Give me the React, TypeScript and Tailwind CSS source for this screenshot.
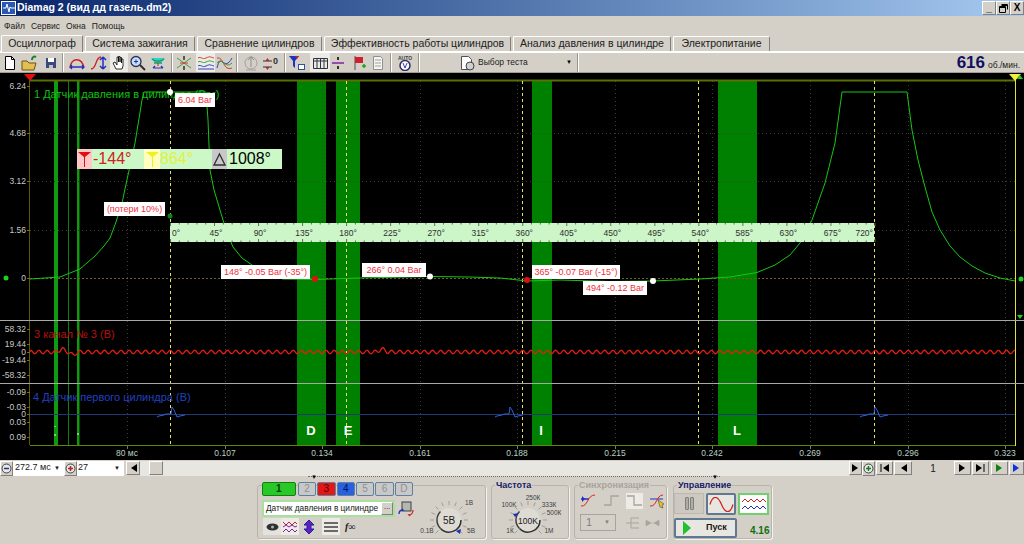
import { ReactNode } from "react";

const raised = "border border-t-white border-l-white border-r-[#808080] border-b-[#808080] bg-[#d4d0c8]";

const tabs = [
  { label: "Система зажигания", w: "w-[110px]" },
  { label: "Сравнение цилиндров", w: "w-[125px]" },
  { label: "Эффективность работы цилиндров", w: "w-[187px]" },
  { label: "Анализ давления в цилиндре", w: "w-[158px]" },
  { label: "Электропитание", w: "w-[97px]" },
];

const Ico = ({ children, w = 16 }: { children: ReactNode; w?: number }) => (
  <svg width={w} height="16" viewBox={`0 0 ${w} 16`} fill="none" className="shrink-0">
    {children}
  </svg>
);

const Sep = () => <div className="w-[2px] h-[19px] border-l border-l-[#9a9690] border-r border-r-white shrink-0" />;

const Toolbar = () => (
  <div className="h-[21px] flex items-center pl-[2px] border-t border-t-white border-b border-b-[#a09c94] relative">
    <Ico><path d="M3.500 1.500h6l3 3v10h-9z" fill="#fff" stroke="#000" /><path d="M9.500 1.500v3h3" stroke="#000" /></Ico>
    <div className="w-[3px]" />
    <Ico w={18}><path d="M1 6h5l2 2h7l-2 7H1z" fill="#e0c050" stroke="#705010" /><path d="M11 5c0-3 2-4 4-3" stroke="#208020" strokeWidth="2" /></Ico>
    <div className="w-[4px]" />
    <Ico><path d="M3 3h10v10H3z" fill="#3a4a80" /><path d="M5 3h6v4H5z" fill="#fff" /><path d="M6 10h4v3H6z" fill="#c0c0c0" /></Ico>
    <div className="w-[3px]" />
    <Sep />
    <div className="w-[3px]" />
    <Ico w={20}><path d="M3 13C4 2 15 2 17 13" stroke="#d02020" strokeWidth="1.500" /><path d="M3 12h14M3 12l2-2M3 12l2 2M17 12l-2-2M17 12l-2 2" stroke="#2030c0" strokeWidth="1.300" /></Ico>
    <div className="w-[3px]" />
    <Ico w={20}><path d="M1 14C7 14 5 2 11 2" stroke="#d02020" strokeWidth="1.300" /><path d="M13 2v12M13 2l-3 3M13 2l3 3M13 14l-3-3M13 14l3-3" stroke="#2030c0" strokeWidth="1.500" /></Ico>
    <div className="w-[18px] h-[19px] bg-[#ecebe6] flex items-center justify-center">
      <Ico><path d="M5 14L2 8l2-1 2 3V2h1.500v5V1.500H9V7V2.500h1.500V8V4H12v7l-1 3z" fill="#fff" stroke="#000" strokeWidth=".8" /></Ico>
    </div>
    <div className="w-[1px]" />
    <Ico w={17}><circle cx="7" cy="6.500" r="5" fill="#c8e0f0" stroke="#303060" strokeWidth="1.300" /><path d="M5 6.500h4M7 4.500v4" stroke="#2030c0" /><path d="M11 10l5 5" stroke="#303030" strokeWidth="2" /></Ico>
    <div className="w-[3px]" />
    <Ico w={18}><path d="M2 3h14l-4 5H6z" fill="#30d0d0" /><path d="M3 4c3 3 9 3 12 0M5 8h8" stroke="#20a060" strokeWidth="1.500" /><path d="M4 13h10M4 13l2-2M14 13l-2-2" stroke="#2030c0" strokeWidth="1.200" /><path d="M9 8v3" stroke="#d02020" /></Ico>
    <div className="w-[4px]" />
    <Sep />
    <div className="w-[2px]" />
    <Ico w={18}><path d="M2 3L16 13M2 13L16 3" stroke="#40a040" /><path d="M9 1v4M9 11v4" stroke="#303030" strokeWidth="1.500" /><path d="M5 8h8" stroke="#d03030" /></Ico>
    <div className="w-[3px]" />
    <div className="w-[19px] h-[19px] bg-[#ecebe6] flex items-center justify-center">
      <Ico w={18}><path d="M1 3c3-2 4 2 8 0s4-1 8 0" stroke="#d04030" /><path d="M1 7c3-2 4 2 8 0s4-1 8 0" stroke="#30a030" /><path d="M1 11c3-2 4 2 8 0s4-1 8 0" stroke="#3040c0" /><path d="M1 14h16" stroke="#3040c0" /></Ico>
    </div>
    <div className="w-[1px]" />
    <Ico w={18}><path d="M1 13C5-4 8 18 16 3" stroke="#3040c0" /><path d="M1 3c7-2 6 14 15 10" stroke="#d04030" /><path d="M1 8c5-7 8 7 15 0" stroke="#30a030" /></Ico>
    <div className="w-[2px]" />
    <Sep />
    <div className="w-[4px]" />
    <Ico w={18}><circle cx="9" cy="8" r="6" stroke="#a0a0a0" /><path d="M9 1v11M6 5l3-3 3 3" stroke="#909090" /><path d="M4 15h10" stroke="#a0a0a0" /></Ico>
    <div className="w-[2px]" />
    <Ico w={19}><path d="M1 6h9M1 12h9" stroke="#303030" /><path d="M5.500 3l-2 3h4zM5.500 15l-2-3h4z" fill="#c02020" /><text x="11" y="9" fontSize="9" fontWeight="700" fill="#303030" fontFamily="Liberation Sans, sans-serif">0</text></Ico>
    <div className="w-[3px]" />
    <Sep />
    <div className="w-[2px]" />
    <Ico w={18}><path d="M1 1h10L7 6v7L5 11V6z" fill="#2030c0" /><path d="M7 1h4L9 4z" fill="#d02020" /><rect x="10.500" y="9.500" width="6" height="5" fill="#fff" stroke="#3050a0" /></Ico>
    <div className="w-[4px]" />
    <div className="w-[20px] h-[19px] bg-[#ecebe6] flex items-center justify-center">
      <Ico w={17}><path d="M1.500 3.500h14v10h-14zM1.500 6h14M5 3.500v10M8.500 3.500v10M12 3.500v10" stroke="#303040" /></Ico>
    </div>
    <Ico><path d="M2 8h12" stroke="#8020a0" strokeWidth="1.500" /><path d="M8 2v3M8 11v3" stroke="#303030" strokeWidth="2" /></Ico>
    <div className="w-[5px]" />
    <Ico><path d="M4 1v14" stroke="#505050" /><path d="M4 2h8v6H4z" fill="#d02030" /><path d="M11 11h4M13 9v4" stroke="#20a020" strokeWidth="1.500" /></Ico>
    <div className="w-[3px]" />
    <Ico><path d="M3.500 1.500h7l2 2v11h-9z" fill="#f4f4f0" stroke="#909090" /><path d="M5 5h6M5 8h6M5 11h6" stroke="#a0a0a0" /></Ico>
    <div className="w-[4px]" />
    <Sep />
    <div className="w-[4px]" />
    <Ico w={18}><text x="2" y="5" fontSize="5" fontWeight="700" fill="#404040" fontFamily="Liberation Sans, sans-serif">AUTO</text><circle cx="9" cy="10.500" r="5" fill="#fff" stroke="#303060" strokeWidth="1.500" /><path d="M7 8l2 5 2-5" stroke="#3040c0" /></Ico>
    <div className="w-[4px]" />
    <Sep />
    <div className="w-[38px]" />
    <Ico w={20}><path d="M3.500 1.500h7l3 3v10h-10z" fill="#fff" stroke="#505050" /><circle cx="12" cy="11" r="4" fill="#d0d0d0" stroke="#404040" /></Ico>
    <span className="text-[8.500px] w-[88px] text-[#202020] whitespace-nowrap">Выбор теста</span>
    <span className="text-[6px] text-black w-[11px]">▼</span>
    <Sep />
    <div className="ml-auto mr-[4px] flex items-baseline gap-[3px]">
      <span className="text-[17px] leading-none font-bold text-[#101060]">616</span>
      <span className="text-[8.500px] text-[#202020]">об./мин.</span>
    </div>
  </div>
);

const yLabels: [string, number][] = [
  ["6.24", 89], ["4.68", 136], ["3.12", 184], ["1.56", 233], ["0", 281],
  ["58.32", 332], ["19.44", 347], ["0", 355], ["-19.44", 363], ["-58.32", 378],
  ["-0.09", 395], ["-0.03", 410], ["0", 417], ["0.03", 425], ["0.09", 440],
];
const times: [string, number][] = [
  ["80 мс", 127], ["0.107", 225], ["0.134", 322], ["0.161", 420], ["0.188", 517],
  ["0.215", 615], ["0.242", 712], ["0.269", 810], ["0.296", 908], ["0.323", 1005],
];
const bands: [number, number][] = [[297, 29], [336, 24], [532, 20], [718, 39]];
const thin: [number, number, string][] = [[54, 4, "#109a10"], [68, 1, "#0c800c"], [77, 2.500, "#109a10"]];
const cursors = [170.500, 346.500, 522.500, 698.500, 874.500];
const marks: [string, number][] = [["D", 311], ["E", 348], ["I", 541], ["L", 737]];

const pressure =
  "M30 279 L60 277 L80 269 L95 256 L104 246 L110 238 L116 222 L122 203 L128 175 L135 143 L142 100 L144 92 L206 92 L208 120 L210 170 L214 190 L220 210 L226 230 L233 247 L242 258 L252 265 L265 274 L283 279 L315 279.500 L360 278 L430 276.500 L470 277 L500 278 L527 281 L560 280 L610 281.500 L653 281 L700 279 L730 277 L757 272.500 L775 265 L790 255 L800 243 L812 220 L825 183 L835 143 L842 92 L907 92 L912 130 L918 160 L925 187 L932 212 L940 230 L950 246 L960 257 L972 266 L985 273 L1000 278 L1015 281";

const redWave = () => {
  let d = "M30 352";
  for (let x = 31; x <= 1015; x += 1) {
    const bump = Math.exp(-((x - 62) ** 2) / 12) * -3 + Math.exp(-((x - 73) ** 2) / 10) * 3 + Math.exp(-((x - 382) ** 2) / 12) * -3;
    d += ` L${x} ${(352 + 1.800 * Math.sin((x * 2 * Math.PI) / 8.200) + bump).toFixed(1)}`;
  }
  return d;
};

const bluePulse = (x: number) =>
  `M${x - 15} 417 L${x - 13} 416 L${x - 8} 415 L${x - 6} 414 L${x - 1} 414 L${x} 407 L${x + 2} 410 L${x + 5} 417 L${x + 8} 416 L${x + 13} 415`;

const rulerTicks = Array.from({ length: 81 }, (_, i) => 170.500 + i * 8.806);
const rulerLabels = Array.from({ length: 16 }, (_, i) => ({ t: `${(i + 1) * 45}°`, x: 172 + (i + 1) * 44.030 }));

const PlotSvg = () => (
  <svg className="absolute inset-0" width="1024" height="387" viewBox="0 73 1024 387" fontFamily="Liberation Sans, sans-serif">
    <rect x="0" y="73" width="1024" height="387" fill="#000" />
    {bands.map(([x, w]) => <rect key={x} x={x} y="81" width={w} height="364" fill="#008000" />)}
    {thin.map(([x, w, c]) => <rect key={x} x={x} y="81" width={w} height="364" fill={c} />)}
    {times.map(([, x]) => <path key={x} d={`M${x + 0.500} 81V445`} stroke="#3a3a3a" strokeDasharray="1 3" />)}
    {[133, 181, 230].map((y) => <path key={y} d={`M30 ${y}.5H1015`} stroke="#3a3a3a" strokeDasharray="1 3" />)}
    <path d="M30 278.500H1015" stroke="#706020" strokeDasharray="2 2" />
    <path d="M30 80.500H1015" stroke="#5a7000" strokeWidth="2" />
    <path d="M29.500 80V445" stroke="#605800" />
    <path d="M30 445.500H1015" stroke="#5a8a00" />
    <path d="M1015.500 80V446" stroke="#e0e040" />
    {cursors.map((x) => <path key={x} d={`M${x} 81V445`} stroke="#e8e060" strokeDasharray="3 3" />)}
    <path d="M0 320.500H1024M0 383.500H1024" stroke="#a8a8a8" />
    <path d={pressure} stroke="#14c814" fill="none" />
    <path d={redWave()} stroke="#e02010" strokeWidth="1.300" fill="none" />
    <path d="M30 414.500H1015" stroke="#203a78" />
    {[172, 510, 875].map((x) => <path key={x} d={bluePulse(x)} stroke="#3060d8" fill="none" />)}
    <path d="M55 426v1M55 434v2M78 433v2" stroke="#e0ffe0" />
    {yLabels.map(([t, y]) => <text key={t + y} x="26" y={y} textAnchor="end" fontSize="8.500" fill="#c8c8c8">{t}</text>)}
    {yLabels.map(([t, y]) => <path key={`tick${t}${y}`} d={`M27 ${y - 3}.5H30`} stroke="#807000" />)}
    {times.map(([t, x]) => <text key={t} x={x} y="456" textAnchor="middle" fontSize="8.500" fill="#b8d0c0">{t}</text>)}
    {times.map(([t, x]) => <path key={`t${t}`} d={`M${x + 0.500} 446v3`} stroke="#708060" />)}
    <text x="34" y="98" fontSize="11" fill="#10c010">1 Датчик давления в цилиндре (Bar)</text>
    <text x="34" y="338" fontSize="11" fill="#b81010">3 канал № 3 (В)</text>
    <text x="33" y="401" fontSize="11" fill="#2040c0">4 Датчик первого цилиндра (В)</text>
    {marks.map(([t, x]) => <text key={t} x={x} y="435" textAnchor="middle" fontSize="13" fontWeight="700" fill="#fff">{t}</text>)}
    <path d="M24 74h12l-6 7z" fill="#e01010" />
    <path d="M1009 74h12l-6 7z" fill="#f0f040" />
    <path d="M1017 79l3-4 3 4zM1017 315l3 4 3-4z" fill="#20d020" />
    <circle cx="1021" cy="279" r="2.500" fill="#20d020" />
    <circle cx="6" cy="278" r="2.500" fill="#20d020" />

    <rect x="170" y="223" width="704" height="19" fill="#ccf5c8" />
    {rulerTicks.map((x, i) => (
      <path key={x} d={`M${x} 223v${i % 5 === 0 ? 3 : 1.500}M${x} 242v-${i % 5 === 0 ? 3 : 1.500}`} stroke="#607060" />
    ))}
    <text x="172" y="236" fontSize="8.500" fill="#303030">0°</text>
    {rulerLabels.map(({ t, x }, i) => (
      <text key={t} x={i === 15 ? 873 : x} y="236" textAnchor={i === 15 ? "end" : "middle"} fontSize="8.500" fill="#303030">{t}</text>
    ))}

    <circle cx="170" cy="92" r="3" fill="#fff" />
    <circle cx="170" cy="216" r="2.500" fill="#108010" />
    <circle cx="315" cy="279" r="3" fill="#e01010" />
    <circle cx="430" cy="276.500" r="3" fill="#fff" />
    <circle cx="527" cy="280" r="3" fill="#e01010" />
    <circle cx="653" cy="281" r="3" fill="#fff" />
  </svg>
);

const notes = [
  { t: "6.04 Bar", c: "top-[20px] left-[175px] w-[40px]" },
  { t: "(потери 10%)", c: "top-[129px] left-[104px] w-[61px]" },
  { t: "148° -0.05 Bar (-35°)", c: "top-[192px] left-[221px] w-[89px]" },
  { t: "266° 0.04 Bar", c: "top-[190px] left-[362px] w-[64px]" },
  { t: "365° -0.07 Bar (-15°)", c: "top-[192px] left-[532px] w-[88px]" },
  { t: "494° -0.12 Bar", c: "top-[208px] left-[583px] w-[64px]" },
];

const CursorBox = () => (
  <div className="absolute top-[76px] left-[77px] w-[205px] h-[20px] bg-[#ccf8c8] flex items-center text-[16px] leading-none">
    <div className="w-[15px] h-full bg-[#ffc8c8] flex items-center justify-center">
      <svg width="15" height="17" viewBox="0 0 15 17"><path d="M1 1h13L8 6v10H7V6z" fill="#e01010" /></svg>
    </div>
    <span className="w-[52px] pl-[1px] text-[#d02020]">-144°</span>
    <div className="w-[16px] h-full bg-[#ffffc0] flex items-center justify-center">
      <svg width="15" height="17" viewBox="0 0 15 17"><path d="M1 1h13L8 6v10H7V6z" fill="#f0f020" /></svg>
    </div>
    <span className="w-[52px] text-[#e4f040]">864°</span>
    <div className="w-[15px] h-full bg-[#c8c8c8] flex items-center justify-center">
      <svg width="13" height="14" viewBox="0 0 13 14"><path d="M6.500 2L12 13H1z" fill="none" stroke="#303030" strokeWidth="1.300" /></svg>
    </div>
    <span className="ml-[2px] text-black">1008°</span>
  </div>
);

const Plot = () => (
  <div className="relative h-[387px] bg-black overflow-hidden">
    <PlotSvg />
    {notes.map((n) => (
      <div key={n.t} className={`absolute h-[14px] bg-white text-[#f03040] text-[9px] leading-[14px] text-center whitespace-nowrap ${n.c}`}>
        {n.t}
      </div>
    ))}
    <CursorBox />
  </div>
);

const NavBtn = ({ children, w = "w-[17px]" }: { children: ReactNode; w?: string }) => (
  <div className={`${w} h-[14px] ${raised} flex items-center justify-center shrink-0`}>{children}</div>
);
const Tri = ({ dir, color = "#000" }: { dir: "l" | "r"; color?: string }) => (
  <svg width="7" height="8" viewBox="0 0 7 8"><path d={dir === "l" ? "M7 0v8L1 4z" : "M0 0v8l6-4z"} fill={color} /></svg>
);
const RoundBtn = ({ color, plus }: { color: string; plus?: boolean }) => (
  <div className={`w-[13px] h-[15px] ${raised} flex items-center justify-center shrink-0`}>
    <svg width="11" height="11" viewBox="0 0 11 11">
      <circle cx="5.500" cy="5.500" r="4.500" fill="#e8e8e8" stroke="#404040" />
      <path d="M3 5.500h5" stroke={color} strokeWidth="1.500" />
      {plus && <path d="M5.500 3v5" stroke={color} strokeWidth="1.500" />}
    </svg>
  </div>
);

const Controls = () => (
  <div className="h-[16px] flex items-center text-[9px] text-[#202020]">
    <RoundBtn color="#303080" />
    <div className="w-[51px] h-[15px] bg-white flex items-center justify-between pl-[2px] pr-[4px] whitespace-nowrap">
      <span>272.7 мс</span><span className="text-[6px]">▼</span>
    </div>
    <RoundBtn color="#b02020" plus />
    <div className="w-[47px] h-[15px] bg-white flex items-center justify-between pl-[1px] pr-[4px]">
      <span>27</span><span className="text-[6px]">▼</span>
    </div>
    <div className="w-[2px]" />
    <NavBtn w="w-[14px]"><Tri dir="l" /></NavBtn>
    <div className="flex-1 h-[15px] bg-[#e8e6e1] pl-[9px]">
      <div className={`w-[14px] h-[14px] ${raised}`} />
    </div>
    <NavBtn w="w-[13px]"><Tri dir="r" /></NavBtn>
    <RoundBtn color="#108010" plus />
    <div className="w-[1px]" />
    <NavBtn>
      <svg width="9" height="8" viewBox="0 0 9 8"><path d="M1 0v8" stroke="#000" /><path d="M9 0v8L3 4z" /></svg>
    </NavBtn>
    <div className="w-[1px]" />
    <NavBtn w="w-[18px]"><Tri dir="l" /></NavBtn>
    <div className="w-[42px] text-center text-[10px]">1</div>
    <NavBtn><Tri dir="r" /></NavBtn>
    <div className="w-[1px]" />
    <NavBtn>
      <svg width="9" height="8" viewBox="0 0 9 8"><path d="M8 0v8" stroke="#000" /><path d="M0 0v8l6-4z" /></svg>
    </NavBtn>
    <div className="w-[2px]" />
    <NavBtn><Tri dir="r" color="#108010" /></NavBtn>
    <div className="w-[1px]" />
    <NavBtn w="w-[15px]"><Tri dir="r" color="#1030e0" /></NavBtn>
  </div>
);

const Group = ({ title, muted, className, children }: { title?: string; muted?: boolean; className: string; children: ReactNode }) => (
  <div className={`relative h-[54px] rounded-[3px] border border-[#b8b4ac] shadow-[1px_1px_0_#f4f2ee] ${className}`}>
    {title && (
      <span className={`absolute -top-[7px] left-[3px] px-[1px] bg-[#d4d0c8] text-[9px] font-bold leading-[12px] whitespace-nowrap ${muted ? "text-[#a8a49c]" : "text-[#14206a]"}`}>
        {title}
      </span>
    )}
    {children}
  </div>
);

const chans = [
  { t: "2", c: "w-[19px] bg-[#c8c8c8] text-[#909090]" },
  { t: "3", c: "w-[19px] bg-[#e01818] text-[#600000]" },
  { t: "4", c: "w-[19px] bg-[#2860e0] text-[#001060]" },
  { t: "5", c: "w-[19px] bg-[#c8c8c8] text-[#909090]" },
  { t: "6", c: "w-[19px] bg-[#c8c8c8] text-[#909090]" },
  { t: "D", c: "w-[19px] bg-[#c8c8c8] text-[#909090]" },
];

const Dial = ({ label, fs, arrow, labels }: { label: string; fs: number; arrow: string; labels: [string, number, number][] }) => {
  const ticks = Array.from({ length: 13 }, (_, i) => (135 + i * 22.500) * (Math.PI / 180));
  return (
    <svg width="72" height="46" viewBox="-36 -27 72 46" fontFamily="Liberation Sans, sans-serif" className="shrink-0">
      {ticks.map((a) => (
        <path key={a} d={`M${(15 * Math.cos(a)).toFixed(1)} ${(15 * Math.sin(a)).toFixed(1)}L${(19 * Math.cos(a)).toFixed(1)} ${(19 * Math.sin(a)).toFixed(1)}`} stroke="#a09c94" />
      ))}
      <circle r="12" fill="#dedbd4" />
      <path d="M-8.500 8.500A12 12 0 0 1 -8.500 -8.500" stroke="#404040" fill="none" strokeWidth="1.500" />
      <path d="M-8.500 8.500A12 12 0 0 0 12 0" stroke="#303030" fill="none" strokeWidth="1.500" />
      <path d={arrow} fill="#1830c0" />
      <text y="3.500" textAnchor="middle" fontSize={fs} fill="#202020">{label}</text>
      {labels.map(([t, x, y]) => <text key={t} x={x} y={y} textAnchor="middle" fontSize="6.500" fill="#404040">{t}</text>)}
    </svg>
  );
};

const Panel = () => (
  <div className="h-[68px] flex flex-col">
    <div className="ml-[308px] w-[412px] h-[4px] border-t border-dotted border-[#707070] relative">
      <span className="absolute -top-[3px] left-[3px] text-[6px] leading-none">▼</span>
      <span className="absolute -top-[3px] right-[2px] text-[6px] leading-none">▼</span>
    </div>
    <div className="flex mt-[5px] ml-[257px] gap-[5px]">
      <Group className="w-[229px] flex">
        <div className="w-[155px] shrink-0 pl-[4px] -mt-[4px] flex flex-col">
          <div className="flex gap-[1px] h-[14px]">
            <div className="w-[35px] mr-[1px] rounded-[2px] bg-[#28c828] border border-[#108010] text-center text-[10px] leading-[12px] font-bold text-[#004000]">1</div>
            {chans.map((c) => (
              <div key={c.t} className={`rounded-[2px] border border-[#6080a0] text-center text-[10px] leading-[12px] ${c.c}`}>{c.t}</div>
            ))}
          </div>
          <div className="flex items-center mt-[4px]">
            <div className="w-[133px] shrink-0 h-[17px] bg-white border-2 border-[#a8e0a0] flex items-center pl-[2px] text-[8.300px] text-[#181818] relative whitespace-nowrap">
              Датчик давления в цилиндре
              <span className={`absolute right-0 top-0 w-[12px] h-[13px] ${raised} text-[8px] leading-[8px] text-center`}>...</span>
            </div>
            <div className="ml-[3px] shrink-0">
              <Ico w={16}><rect x="4" y="1" width="9" height="9" fill="#b0b8b0" stroke="#404040" /><path d="M1 13c0-3 2-4 4-4l-1-1" stroke="#2030c0" strokeWidth="1.300" /><path d="M15 9c0 3-2 5-4 5l1 1" stroke="#d02020" strokeWidth="1.300" /></Ico>
            </div>
          </div>
          <div className="flex items-center mt-[1px] pl-[1px]">
            <div className="w-[18px] h-[17px] bg-[#e4e2dc] flex items-center justify-center">
              <svg width="13" height="8" viewBox="0 0 13 8"><ellipse cx="6.500" cy="4" rx="6" ry="3.500" fill="#303030" /><circle cx="6.500" cy="4" r="1.500" fill="#b0b0b0" /></svg>
            </div>
            <div className="w-[18px] h-[17px] bg-[#ecebe6] flex items-center justify-center">
              <Ico><path d="M1 3l3 3 3-3 3 3 3-3 2 2" stroke="#c02030" /><path d="M1 8l3-2 3 2 3-2 3 2 2-1" stroke="#8020a0" /><path d="M1 13l3-3 3 3 3-3 3 3 2-2" stroke="#8020a0" /></Ico>
            </div>
            <div className="w-[19px] flex justify-center">
              <Ico><path d="M8 1L3 6h3v4H3l5 5 5-5h-3V6h3z" fill="#6020c0" stroke="#2020a0" /></Ico>
            </div>
            <div className="w-[4px]" />
            <div className="w-[18px] h-[17px] bg-[#ecebe6] flex items-center justify-center">
              <Ico><path d="M1 4h14M1 8h14M1 12h14" stroke="#404040" strokeWidth="1.300" /></Ico>
            </div>
            <span className="ml-[5px] text-[10px] font-bold italic font-['Liberation_Serif',serif] text-[#181818]">f∞</span>
          </div>
        </div>
        <div className="pt-[7px]">
          <Dial label="5В" fs={10} arrow="M7 11l5-2-1 5z" labels={[["1В", 20, -15], ["5В", 22, 13], ["0.1В", -22, 13]]} />
        </div>
      </Group>
      <Group title="Частота" className="w-[78px] flex pt-[7px]">
        <Dial label="100K" fs={8.500} arrow="M-15 -6l6-1-4 4z" labels={[["250К", 5, -20], ["100K", -19, -13], ["333К", 21, -13], ["500К", 26, -5], ["1К", -18, 13], ["1M", 21, 13]]} />
      </Group>
      <Group title="Синхронизация" muted className="w-[93px] px-[5px] pt-[7px]">
        <div className="flex items-center gap-[6px]">
          <Ico w={17}><path d="M1 6h8" stroke="#2030c0" strokeWidth="1.500" /><path d="M1 13C8 14 7 2 15 2" stroke="#e02020" /><path d="M2 3v6l3-3z" fill="#2030c0" /></Ico>
          <Ico w={17}><path d="M1 12h7V3h8M8 5v6" stroke="#a8a49c" strokeWidth="1.300" /></Ico>
          <div className="w-[17px] h-[16px] bg-[#ecebe6]"><Ico w={17}><path d="M1 3h7v9h8M8 5v6" stroke="#a8a49c" strokeWidth="1.300" /></Ico></div>
          <Ico w={17}><path d="M1 6h13" stroke="#2030c0" /><path d="M1 13C8 14 7 2 14 2" stroke="#e02020" /><path d="M9 7l6 4-2 1 1 3-3-1z" fill="#f0c020" stroke="#303030" strokeWidth=".5" /></Ico>
        </div>
        <div className="flex items-center mt-[5px]">
          <div className="w-[36px] h-[17px] border border-[#a8a49c] flex items-center justify-between px-[5px] text-[11px] text-[#808080]">
            <span>1</span><span className="text-[6px]">▼</span>
          </div>
          <div className="ml-[9px]"><Ico w={15}><path d="M1 8h5M6 3v10M6 3h8M6 8h8M6 13h8" stroke="#a8a49c" /></Ico></div>
          <div className="ml-[5px]"><Ico w={15}><path d="M0 8h15M1 5l5 3-5 3zM14 5L9 8l5 3z" fill="#a8a49c" stroke="#a8a49c" strokeWidth=".5" /></Ico></div>
        </div>
      </Group>
      <Group title="Управление" className="w-[99px] ml-[1px] pt-[7px]">
        <div className="flex gap-[2px]">
          <div className="w-[30px] h-[21px] bg-[#cdc9c1] border border-[#bcb8b0] flex items-center justify-center gap-[1px]">
            <div className="w-[4px] h-[13px] rounded-[1px] bg-[#b0aca4] border border-[#808080]" /><div className="w-[4px] h-[13px] rounded-[1px] bg-[#b0aca4] border border-[#808080]" />
          </div>
          <div className="w-[30px] h-[22px] bg-[#e8e6e0] border-2 border-[#607890] rounded-[2px] flex items-center justify-center">
            <svg width="25" height="15" viewBox="0 0 25 15"><path d="M1 7.500C4-3 9-1 12.500 7.500S21 18 24 7.500" stroke="#d02020" strokeWidth="1.200" fill="none" /></svg>
          </div>
          <div className="w-[31px] h-[22px] bg-white border-2 border-[#70d070] flex items-center justify-center">
            <svg width="26" height="16" viewBox="0 0 26 16"><path d="M1 6l3-3 3 3 3-3 3 3 3-3 3 3 3-3 3 3" stroke="#d02020" fill="none" /><path d="M1 13l3-3 3 3 3-3 3 3 3-3 3 3 3-3 3 3" stroke="#2030c0" fill="none" /></svg>
          </div>
        </div>
        <div className="flex items-center mt-[2px]">
          <div className="w-[63px] h-[20px] bg-[#e8e6e0] border-2 border-[#607890] rounded-[2px] flex items-center pl-[6px]">
            <svg width="10" height="14" viewBox="0 0 10 14"><path d="M1 0v14l8-7z" fill="#20c030" /></svg>
            <span className="ml-[14px] text-[9px] font-bold text-[#181818]">Пуск</span>
          </div>
          <span className="ml-[13px] mt-[6px] text-[10px] font-bold text-[#107010]">4.16</span>
        </div>
      </Group>
    </div>
  </div>
);

export default function App() {
  return (
    <div className="w-[1024px] h-[544px] overflow-hidden flex flex-col bg-[#d4d0c8] font-['Liberation_Sans',sans-serif]">
      <div className="h-[16px] flex items-center bg-gradient-to-r from-[#0a246a] to-[#a6caf0]">
        <div className="w-[15px] h-[14px] ml-[1px] bg-[#2a58b0] border border-white flex items-center justify-center">
          <svg width="12" height="10" viewBox="0 0 12 10"><path d="M0 5h3l1-4 2 8 1-5 1 1h4" stroke="#fff" fill="none" /></svg>
        </div>
        <span className="ml-[1px] text-white font-bold text-[10.500px]">Diamag 2 (вид дд газель.dm2)</span>
        <div className="ml-auto flex">
          {["_", "restore", "X"].map((b, i) => (
            <div key={b} className={`w-[14px] h-[14px] ${raised} flex items-center justify-center text-[10px] font-bold text-black leading-none`}>
              {i === 1 ? (
                <svg width="9" height="9" viewBox="0 0 9 9"><path d="M2.500.5h6v5M.5 2.500h6v6h-6zM.5 3.500h6M2.500 1.500h6" stroke="#000" fill="none" /></svg>
              ) : b}
            </div>
          ))}
        </div>
      </div>
      <div className="h-[20px] flex items-center pl-[4px] gap-[6px] text-[8.500px] text-[#202020]">
        <span>Файл</span><span>Сервис</span><span>Окна</span><span>Помощь</span>
      </div>
      <div className="h-[16px] flex items-end pl-[1px] gap-[2px] border-b border-b-white text-[10.500px] text-[#202020]">
        <div className="w-[82px] h-[17px] -mb-[1px] bg-[#d4d0c8] border border-b-0 border-t-white border-l-white border-r-[#808080] rounded-t-[2px] flex items-center justify-center relative z-10">Осциллограф</div>
        {tabs.map((t) => (
          <div key={t.label} className={`${t.w} h-[15px] border border-b-0 border-t-white border-l-white border-r-[#808080] rounded-t-[2px] flex items-center justify-center whitespace-nowrap`}>
            {t.label}
          </div>
        ))}
      </div>
      <Toolbar />
      <Plot />
      <Controls />
      <Panel />
    </div>
  );
}
